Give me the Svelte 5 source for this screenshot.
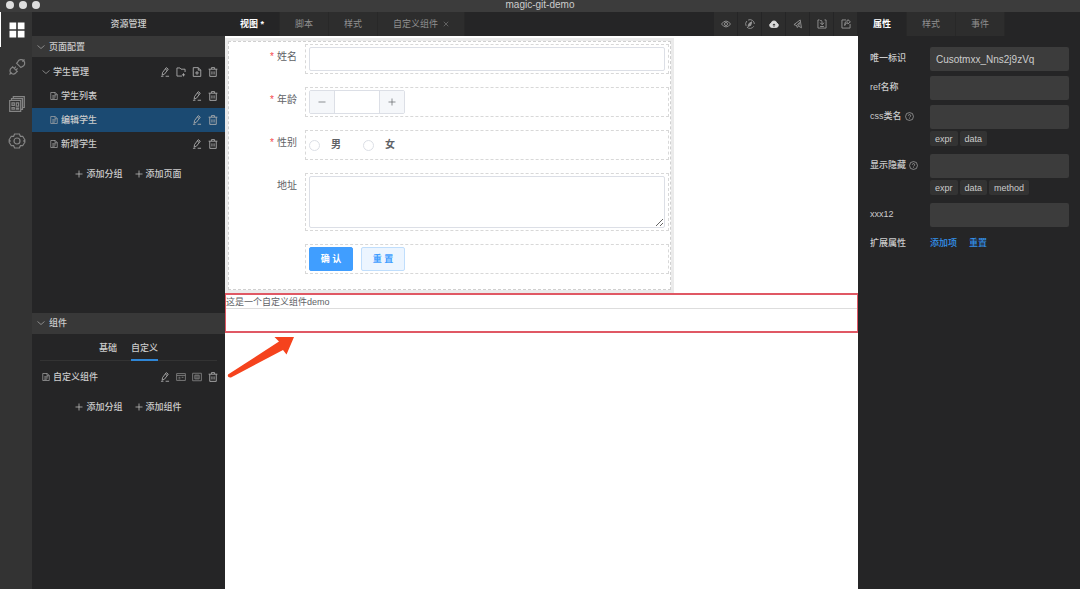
<script lang="ts">
type Page = { name: string };

const icons: Record<string, string> = {
  grid: '<path d="M.5.5h6.700v6.700H.5zM8.800.5h6.700v6.700H8.800zM.5 8.800h6.700v6.700H.5zM8.800 8.800h6.700v6.700H8.800z" fill="currentColor" stroke="none"/>',
  plug: '<path d="M7.200 3.800 12.200 8.800M7.800 4.400l1-1.600a3.600 3.600 0 1 1 4.600 4.800l-1.600 1M13.400 2.600 15.500.5M3.200 7.300l5.500 5.500M4 8.100l-1.600 1a3.300 3.300 0 1 0 4.600 4.600l1-1.600M2.600 13.400.5 15.500M5.200 9.300l1.700-1.700M6.900 11l1.700-1.700"/>',
  layers: '<path d="M.7 4.500h11v10.800H.7zM2.500 4.300V2.600h11v10.800h-1.600M4.300 2.400V.7h11v10.800h-1.600M3 6.900h2.300v2.500H3zM7.300 6.900h2.300v3.300H7.300zM3 11.500h2.300v1.600H3zM7.300 12.100h2.300v1H7.300z"/>',
  gear: '<path d="M5.600 1h4.800l1 2.300h2.300L16 7l-1.200 1L16 9l-2.300 3.700h-2.300l-1 2.300H5.600l-1-2.300H2.300L0 9l1.200-1L0 7l2.300-3.700h2.300z"/><circle cx="8" cy="8" r="3"/>',
  chevron: '<path d="m1 5 7 6 7-6"/>',
  file: '<path d="M1.500 1h9l4 4v10h-13zM10 1v4.500h4.500M4.500 7.500h7M4.500 10h7M4.500 12.500h5"/>',
  edit: '<path d="m4 9 6-8 3.200 2.400-6 8L3.500 13zM8.500 3.200l3.200 2.400M1.500 14.800h4M9 14.800h5.500"/>',
  folder: '<path d="M14.500 8V3.500H8L6.300 1.500H1.500v13h8M12 10v5M9.500 12.500h5"/>',
  fileAdd: '<path d="M2 1h8l4 4v10H2zM10 1v4h4M8 6.500v6M5 9.500h6"/>',
  trash: '<path d="M1 3.500h14M5.500 3V1h5v2M2.800 3.700V15h10.400V3.700M6.300 7v5M9.700 7v5"/>',
  form: '<path d="M1 2.500h14v11H1zM1 5.500h14M4 8.500h3M9 8.500h3M4 11h3"/>',
  frame: '<path d="M1 2h14v12H1zM4.500 5h7v6h-7zM6.500 5v6M9.500 5v6"/>',
  plus: '<path d="M8 1v14M1 8h14"/>',
  eye: '<path d="M.8 8Q4 3.300 8 3.300T15.200 8Q12 12.700 8 12.700T.8 8z"/><circle cx="8" cy="8" r="2.500"/>',
  compass: '<path d="M5 1.700A7 7 0 0 1 15 8M14 11.700A7 7 0 0 1 3 13M1.700 11A7 7 0 0 1 3 3.200"/><path d="m10.800 4.500-1.600 5.800-4.500 1.500L6.500 7z" fill="currentColor"/>',
  cloud: '<path d="M4 13.500a3.500 3.500 0 0 1-.5-6.800A4.600 4.600 0 0 1 12.500 6.700 3.500 3.500 0 0 1 12 13.500z" fill="currentColor"/><path d="M8 12.500V8M6 9.800l2-2 2 2" stroke="#2d2d2d"/>',
  send: '<path d="M1.500 9 11.500 1.500 13.500 14 9 11.500l-2.500 2-.5-3zM6 10.500l4.500-5L9 11.500"/>',
  importBox: '<path d="M4 1.500H1.500v13h13v-13H12M5 6l3 3 3.500-3M5 2.500q3-1 3 2V9M5 12h6"/>',
  exportBox: '<path d="M8 1.500H1.500v13h13V8M11 1l4 3.500L11 8V6Q7 5.500 6 10.500 5.500 3 11 3z"/>',
  close: '<path d="m2 2 12 12M14 2 2 14"/>',
  minus: '<path d="M1 8h14"/>',
};

const activities = [
  { icon: 'grid', label: 'resources' },
  { icon: 'plug', label: 'plugins' },
  { icon: 'layers', label: 'templates' },
  { icon: 'gear', label: 'settings' },
];
const pages: Page[] = [{ name: '学生列表' }, { name: '编辑学生' }, { name: '新增学生' }];
const tabs = ['视图 *', '脚本', '样式', '自定义组件'];
const tools = ['eye', 'compass', 'cloud', 'send', 'importBox', 'exportBox'];
const panelTabs = ['属性', '样式', '事件'];
const fields = [
  { id: 'uid', label: '唯一标识', value: 'Cusotmxx_Nns2j9zVq', chips: [], help: false },
  { id: 'ref', label: 'ref名称', value: '', chips: [], help: false },
  { id: 'css', label: 'css类名', value: '', chips: ['expr', 'data'], help: true },
  { id: 'show', label: '显示隐藏', value: '', chips: ['expr', 'data', 'method'], help: true },
  { id: 'xxx12', label: 'xxx12', value: '', chips: [], help: false },
];

let activity = $state(0);
let currentPage = $state(1);
let currentTab = $state(0);
let panelTab = $state(0);
let componentTab = $state(1);
let age = $state('');

function step(n: number) {
  age = String(Math.max(0, Number(age) + n));
}
</script>

{#snippet icon(name: string, cls = '')}
  <svg class="icon {cls}" viewBox="0 0 16 16" aria-hidden="true">{@html icons[name]}</svg>
{/snippet}

{#snippet actions(names: string[])}
  <span class="actions">
    {#each names as name}
      <button aria-label={name}>{@render icon(name)}</button>
    {/each}
  </span>
{/snippet}

{#snippet adders(names: string[])}
  <div class="adders">
    {#each names as name}
      <button>{@render icon('plus', 'small')}{name}</button>
    {/each}
  </div>
{/snippet}

<div class="app">
  <header class="titlebar">
    <div class="dots"><i></i><i></i><i></i></div>
    <span>magic-git-demo</span>
  </header>

  <div class="workspace">
    <nav class="activity">
      {#each activities as item, i}
        <button class:active={activity === i} aria-label={item.label} onclick={() => (activity = i)}>
          {@render icon(item.icon, 'large')}
        </button>
      {/each}
    </nav>

    <aside class="sidebar">
      <div class="sidebar-title">资源管理</div>
      <section>
        <h2>{@render icon('chevron', 'small')}页面配置</h2>
        <div class="tree">
          <div class="row">
            {@render icon('chevron', 'small')}
            <span class="name">学生管理</span>
            {@render actions(['edit', 'folder', 'fileAdd', 'trash'])}
          </div>
          {#each pages as page, i}
            <div class="row child" class:selected={currentPage === i}>
              {@render icon('file', 'small')}
              <button class="name" onclick={() => (currentPage = i)}>{page.name}</button>
              {@render actions(['edit', 'trash'])}
            </div>
          {/each}
        </div>
        {@render adders(['添加分组', '添加页面'])}
      </section>
      <section>
        <h2>{@render icon('chevron', 'small')}组件</h2>
        <div class="component-tabs">
          {#each ['基础', '自定义'] as name, i}
            <button class:active={componentTab === i} onclick={() => (componentTab = i)}>{name}</button>
          {/each}
        </div>
        <div class="row">
          {@render icon('file', 'small')}
          <span class="name">自定义组件</span>
          <span class="dim">{@render actions(['edit', 'form', 'frame', 'trash'])}</span>
        </div>
        {@render adders(['添加分组', '添加组件'])}
      </section>
    </aside>

    <main class="editor">
      <div class="bar">
        {#each tabs as name, i}
          <button class="tab" class:active={currentTab === i} onclick={() => (currentTab = i)}>
            {name}{#if i === 3}{@render icon('close', 'tiny')}{/if}
          </button>
        {/each}
        <div class="tools">
          {#each tools as name}
            <button class={name} aria-label={name}>{@render icon(name)}</button>
          {/each}
        </div>
      </div>

      <div class="canvas">
        <form class="form">
          <div class="item">
            <label class="required" for="name">姓名</label>
            <div class="slot"><input id="name" type="text" /></div>
          </div>
          <div class="item">
            <label class="required" for="age">年龄</label>
            <div class="slot">
              <div class="number">
                <button type="button" aria-label="minus" onclick={() => step(-1)}>{@render icon('minus', 'small')}</button>
                <input id="age" type="text" bind:value={age} />
                <button type="button" aria-label="plus" onclick={() => step(1)}>{@render icon('plus', 'small')}</button>
              </div>
            </div>
          </div>
          <div class="item">
            <span class="label required">性别</span>
            <div class="slot radios">
              <label><input type="radio" name="sex" value="m" />男</label>
              <label><input type="radio" name="sex" value="f" />女</label>
            </div>
          </div>
          <div class="item">
            <label for="address">地址</label>
            <div class="slot"><textarea id="address"></textarea></div>
          </div>
          <div class="item">
            <span class="label"></span>
            <div class="slot buttons">
              <button type="button" class="primary">确 认</button>
              <button type="reset">重 置</button>
            </div>
          </div>
        </form>

        <div class="custom">
          <p>这是一个自定义组件demo</p>
        </div>
        <svg class="arrow" viewBox="0 0 68 44" aria-hidden="true">
          <path d="M1 39.500 52 6.500 47.500 2H67L59.500 19.500 56 15 4 42.500Q0 43 1 39.500z" fill="#f5431d" />
        </svg>
      </div>
    </main>

    <aside class="panel">
      <div class="bar">
        {#each panelTabs as name, i}
          <button class="tab" class:active={panelTab === i} onclick={() => (panelTab = i)}>{name}</button>
        {/each}
      </div>
      <div class="props">
        {#each fields as field}
          <div class="prop">
            <label for={field.id}>
              {field.label}
              {#if field.help}
                <svg class="help" viewBox="0 0 16 16" aria-hidden="true">
                  <circle cx="8" cy="8" r="7" />
                  <path d="M6 6.500a2 2 0 1 1 2.600 2q-.6.300-.6 1.200M8 11v1.200" />
                </svg>
              {/if}
            </label>
            <div>
              <input id={field.id} type="text" value={field.value} />
              {#if field.chips.length}
                <div class="chips">
                  {#each field.chips as chip}<button>{chip}</button>{/each}
                </div>
              {/if}
            </div>
          </div>
        {/each}
        <div class="prop">
          <span class="label">扩展属性</span>
          <div class="links"><a href="#add">添加项</a><a href="#reset">重置</a></div>
        </div>
      </div>
    </aside>
  </div>
</div>

<style>
  :global(body) { margin: 0; }

  .app {
    min-height: 100vh;
    display: flex;
    flex-direction: column;
    background: #252526;
    color: #ccc;
    font: 9px/12px 'Liberation Sans', 'Noto Sans CJK SC', sans-serif;
  }

  .app :global(*) { box-sizing: border-box; }

  button, input, textarea {
    margin: 0;
    padding: 0;
    border: 0;
    background: none;
    color: inherit;
    font: inherit;
  }

  button { cursor: pointer; }

  input, textarea { outline: none; }

  .icon {
    display: block;
    flex: none;
    width: 10px;
    height: 10px;
    fill: none;
    stroke: currentColor;
    stroke-width: 1.4;
  }

  .icon.large { width: 16px; height: 16px; stroke-width: 1.2; overflow: visible; }
  .icon.small { width: 8px; height: 8px; }
  .icon.tiny { width: 6px; height: 6px; }

  .titlebar {
    display: grid;
    grid-template-columns: 1fr auto 1fr;
    align-items: center;
    height: 12px;
    padding: 0 6px 3px;
    background: #3c3c3c;
    font-size: 10px;
    line-height: 9px;
  }

  .dots { display: flex; gap: 5px; }

  .dots i {
    width: 8px;
    height: 8px;
    border-radius: 50%;
    background: #dedede;
  }

  .workspace {
    flex: 1;
    display: grid;
    grid-template-columns: 32px 193px minmax(0, 1fr) 222px;
  }

  .activity {
    display: flex;
    flex-direction: column;
    gap: 2px;
    background: #333;
    color: #858585;
  }

  .activity button {
    display: grid;
    place-items: center;
    height: 35px;
    border-left: 1px solid transparent;
  }

  .activity .active { color: #fff; border-color: #fff; }

  .sidebar {
    display: flex;
    flex-direction: column;
    font-weight: 500;
  }

  .sidebar-title { line-height: 24px; text-align: center; }

  section { flex: 1 1 0; }

  h2 {
    display: flex;
    align-items: center;
    gap: 4px;
    height: 21px;
    margin: 0;
    padding-left: 5px;
    background: #383838;
    font: inherit;
  }

  .tree { padding-top: 3px; }

  .row {
    display: flex;
    align-items: center;
    gap: 3px;
    height: 24px;
    padding: 0 7px 0 10px;
  }

  .row.child { padding-left: 18px; }
  .row.selected { background: #1b4a72; }
  .row > .icon, h2 .icon { color: #aaa; }

  .name { flex: 1; text-align: left; }

  .actions { display: flex; gap: 6px; color: #b0b0b0; }

  .dim .actions button:nth-child(2),
  .dim .actions button:nth-child(3) { color: #808080; }

  .adders {
    display: flex;
    justify-content: center;
    gap: 12px;
    margin-top: 12px;
  }

  .adders button {
    display: flex;
    align-items: center;
    gap: 3px;
  }

  .component-tabs {
    display: flex;
    justify-content: center;
    gap: 14px;
    height: 27px;
    margin: 0 8px 4px;
    border-bottom: 1px solid #333;
  }

  .component-tabs button {
    height: 27px;
    padding-top: 4px;
    border-bottom: 2px solid transparent;
  }

  .component-tabs .active { border-color: #2f86d6; }

  .bar { display: flex; height: 24px; }

  .tab {
    display: flex;
    align-items: center;
    gap: 5px;
    padding: 0 15px;
    border-right: 1px solid #282828;
    background: #2d2d2d;
    color: #909090;
    white-space: pre;
  }

  .tab.active {
    background: #252526;
    color: #fff;
    font-weight: 700;
  }

  .tools { display: flex; margin-left: auto; }

  .tools button {
    display: grid;
    place-items: center;
    width: 24px;
    border-right: 1px solid #252526;
    background: #2d2d2d;
    color: #999;
  }

  .tools .cloud { color: #ddd; }

  .editor {
    display: flex;
    flex-direction: column;
  }

  .canvas {
    flex: 1;
    padding-top: 2px;
    background: #fff;
    color: #606266;
  }

  .form {
    display: flex;
    flex-direction: column;
    gap: 13px;
    width: 71%;
    padding: 3px 2px 16px 0;
    border: 3px solid #ebebeb;
    outline: 1px dashed #d0d0d0;
    outline-offset: -4px;
  }

  .item {
    display: grid;
    grid-template-columns: 77px 1fr;
    font-size: 10px;
  }

  .item > label, .item > .label {
    padding-right: 8px;
    line-height: 26px;
    text-align: right;
  }

  .required::before {
    content: '*';
    margin-right: 3px;
    color: #f5484c;
  }

  .slot {
    min-height: 30px;
    padding: 2px 3px;
    border: 1px dashed #d8d8d8;
  }

  .slot input[type='text'], textarea {
    display: block;
    width: 100%;
    height: 24px;
    padding: 0 8px;
    border: 1px solid #dcdfe6;
    border-radius: 2px;
  }

  .slot textarea {
    height: 52px;
    padding: 4px 8px;
    resize: vertical;
  }

  .number {
    display: flex;
    width: 96px;
    border: 1px solid #dcdfe6;
    border-radius: 2px;
  }

  .number button {
    display: grid;
    place-items: center;
    flex: none;
    width: 24px;
    background: #f5f7fa;
  }

  .slot .number input {
    height: 22px;
    border-width: 0 1px;
    border-radius: 0;
    text-align: center;
  }

  .radios { display: flex; align-items: center; gap: 22px; }

  .radios label {
    display: flex;
    align-items: center;
    gap: 11px;
    font-weight: 700;
  }

  .radios input {
    appearance: none;
    width: 11px;
    height: 11px;
    border: 1px solid #dcdfe6;
    border-radius: 50%;
  }

  .radios input:checked { border: 4px solid #409eff; }

  .buttons { display: flex; gap: 8px; }

  .buttons button {
    width: 44px;
    height: 24px;
    border: 1px solid #c0defc;
    border-radius: 2px;
    background: #ecf5ff;
    color: #409eff;
    font-size: 9px;
    font-weight: 700;
  }

  .buttons .primary {
    border-color: #409eff;
    background: #409eff;
    color: #fff;
  }

  .custom {
    height: 40px;
    border: solid #e05864;
    border-width: 2px 1px;
  }

  .custom p {
    height: 14px;
    margin: 0;
    border-bottom: 1px solid #ddd;
    line-height: 14px;
  }

  .arrow {
    display: block;
    width: 68px;
    height: 44px;
    margin: 2px;
  }

  .props {
    display: flex;
    flex-direction: column;
    gap: 5px;
    padding: 11px 11px 11px 12px;
  }

  .prop {
    display: grid;
    grid-template-columns: 60px 1fr;
  }

  .prop > label, .prop > .label {
    display: flex;
    align-items: center;
    gap: 3px;
    height: 22px;
    font-weight: 500;
  }

  .help {
    width: 9px;
    height: 9px;
    fill: none;
    stroke: currentColor;
  }

  .prop input {
    display: block;
    width: 100%;
    height: 24px;
    padding: 0 6px;
    border-radius: 2px;
    background: #3c3c3c;
    font-size: 10px;
  }

  .chips { display: flex; gap: 2px; padding: 2px 0 3px; }

  .chips button {
    height: 15px;
    padding: 0 5px;
    border-radius: 2px;
    background: #333;
  }

  .links {
    display: flex;
    align-items: center;
    gap: 12px;
    height: 22px;
  }

  a { color: #3392ec; font-weight: 500; text-decoration: none; }
</style>
